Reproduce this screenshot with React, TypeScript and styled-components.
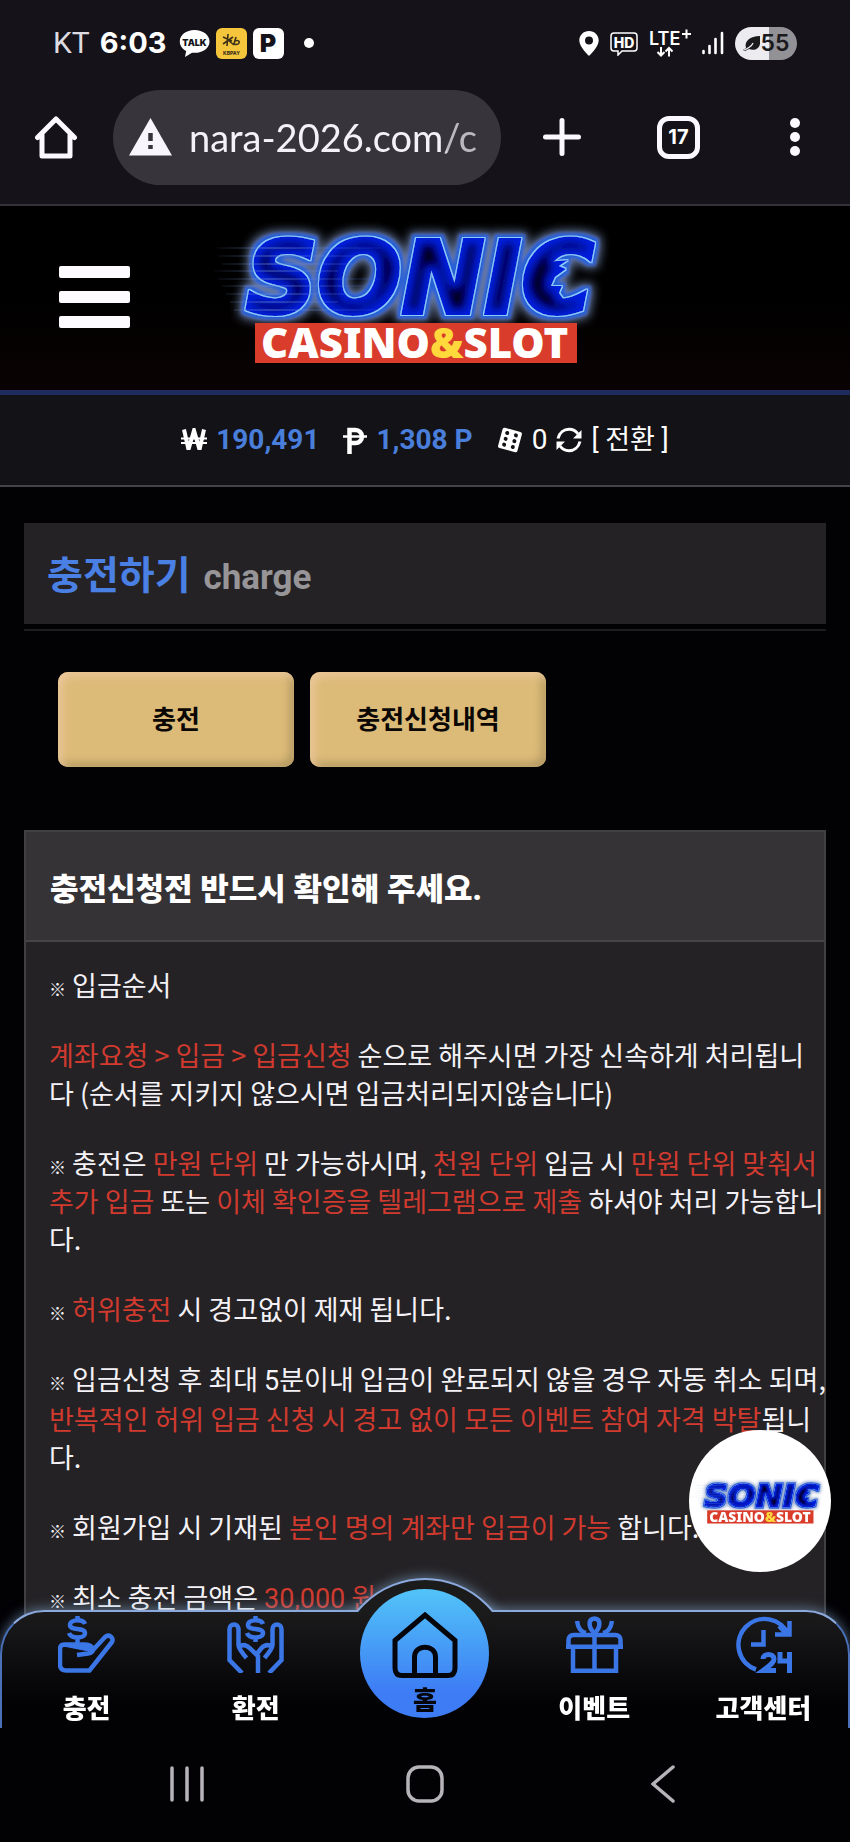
import React, { useId } from "react";
import styled, { createGlobalStyle } from "styled-components";

const GlobalStyle = createGlobalStyle`
  *, *::before, *::after { box-sizing: border-box; }
  html, body { margin: 0; background: #020104; }
  body { font-family: Roboto, "Noto Sans CJK KR", sans-serif; color: #fff; }
  button, input { font: inherit; color: inherit; border: 0; background: none; padding: 0; margin: 0; }
  a { color: inherit; text-decoration: none; }
  h1, h2, p { margin: 0; }
  svg { display: block; flex: none; }
`;

const Screen = styled.div`
  height: 100vh;
  display: flex;
  flex-direction: column;
  overflow: hidden;
`;

/* ---------- device status bar ---------- */

const StatusBar = styled.div`
  flex: none;
  display: flex;
  justify-content: space-between;
  align-items: center;
  height: 86px;
  padding: 0 53px;
  background: #151319;
`;

const StatusGroup = styled.div<{ $gap: number }>`
  display: flex;
  align-items: center;
  gap: ${(p) => p.$gap}px;
`;

const Carrier = styled.span`
  font: 400 30px/40px Roboto, sans-serif;
  color: #dddbe1;
  margin-right: 4px;
`;

const Clock = styled.span`
  font: 700 29px/40px Inter, sans-serif;
  margin-right: 6px;
`;

const AppBadge = styled.span<{ $bg: string }>`
  display: grid;
  place-items: center;
  width: 31px;
  height: 31px;
  border-radius: 6px;
  background: ${(p) => p.$bg};
  color: #151319;
  font: 900 25px/31px Inter, sans-serif;
`;

const Dot = styled.span`
  width: 10px;
  height: 10px;
  margin-left: 14px;
  border-radius: 50%;
  background: #fff;
`;

const Battery = styled.span`
  display: flex;
  align-items: center;
  justify-content: center;
  gap: 1px;
  width: 62px;
  height: 33px;
  border-radius: 17px;
  background: linear-gradient(90deg, #ecebef 55%, #929196 55%);
  color: #1a191c;
  font: 600 23px/33px Inter, sans-serif;
`;

/* ---------- browser toolbar ---------- */

const Toolbar = styled.div`
  flex: none;
  display: flex;
  align-items: center;
  height: 120px;
  padding: 4px 29px 20px 30px;
  background: #151319;
  border-bottom: 2px solid #343238;
`;

const IconButton = styled.button`
  display: grid;
  place-items: center;
  width: 52px;
  height: 94px;
`;

const AddressBar = styled.label`
  display: flex;
  align-items: center;
  flex: 0 1 388px;
  min-width: 0;
  height: 95px;
  margin-left: 31px;
  padding: 0 18px 0 16px;
  gap: 17px;
  border-radius: 48px;
  background: #37343b;
`;

const AddressInput = styled.input`
  flex: 1;
  min-width: 0;
  width: 0;
  height: 60px;
  outline: none;
  color: #f4f2f8;
  font: 400 38px/60px Lato, sans-serif;
  mask-image: linear-gradient(90deg, #000 87%, rgba(0, 0, 0, 0.7) 88%);
`;

const ToolbarActions = styled.div`
  flex: 1;
  display: flex;
  align-items: center;
  justify-content: space-between;
  margin-left: 35px;
`;

const TabCount = styled.span`
  display: grid;
  place-items: center;
  width: 43px;
  height: 43px;
  border: 5px solid #fbf9ff;
  border-radius: 12px;
  font: 700 20px/32px Inter, sans-serif;
`;

/* ---------- site ---------- */

const Site = styled.div`
  flex: 1;
  min-height: 0;
  overflow-y: auto;
  scrollbar-width: none;
  padding-bottom: 260px;
`;

const SiteHeader = styled.header`
  display: grid;
  grid-template-columns: 1fr auto 1fr;
  align-items: center;
  height: 189px;
  padding: 0 79px 10px 59px;
  background: linear-gradient(#000 50%, #0a0203);
  border-bottom: 5px solid #1d2b5e;
`;

const MenuButton = styled.button`
  display: flex;
  flex-direction: column;
  gap: 13px;
  width: 71px;
  padding-top: 8px;
`;

const MenuBar = styled.span`
  height: 12px;
  border-radius: 2px;
  background: #fdfbff;
`;

const Wallet = styled.div`
  display: flex;
  align-items: center;
  justify-content: center;
  height: 92px;
  background: #131216;
  border-bottom: 2px solid #444346;
  font-size: 28px;
  line-height: 38px;
`;

const WalletItem = styled.span`
  display: flex;
  align-items: center;
  gap: 9px;

  & + & {
    margin-left: 24px;
  }
`;

const Amount = styled.strong`
  font-weight: 700;
  color: #4a7edb;
`;

const Convert = styled.button`
  font-size: 27px;
`;

const Page = styled.main`
  padding: 36px 24px 0;
`;

const PageTitle = styled.div`
  display: flex;
  align-items: baseline;
  gap: 13px;
  height: 101px;
  padding: 25px 23px 0;
  background: #242225;
`;

const TitleText = styled.h1`
  font-size: 39px;
  line-height: 56px;
  font-weight: 700;
  color: #4a80e4;
`;

const TitleSub = styled.span`
  font-size: 35px;
  font-weight: 700;
  color: #979598;
`;

const Rule = styled.div`
  height: 2px;
  margin-top: 5px;
  background: #1d1c1f;
`;

const Tabs = styled.div`
  display: flex;
  gap: 16px;
  padding: 41px 34px 63px;
`;

const TabButton = styled.button`
  flex: 0 1 236px;
  height: 95px;
  border-radius: 10px;
  background: #dcbb79;
  box-shadow: inset 4px 4px 8px #ecc89b, inset -4px -4px 8px #b0965f;
  color: #0a0704;
  font-size: 26px;
  line-height: 36px;
  font-weight: 700;
`;

const Notice = styled.section`
  border: 2px solid #403f42;
  background: #242225;
`;

const NoticeTitle = styled.h2`
  padding: 36px 24px 28px;
  background: #353336;
  border-bottom: 2px solid #454447;
  font-size: 31px;
  line-height: 44px;
  font-weight: 900;
`;

const NoticeBody = styled.div`
  display: flex;
  flex-direction: column;
  gap: 32px;
  margin-right: -12px;
  padding: 24px 0 24px 23px;
  font-family: "Noto Sans CJK KR", sans-serif;
  font-size: 27px;
  line-height: 38px;
  color: #f4f2f6;
`;

const Warn = styled.span`
  color: #d03a2f;
`;

const Latin = styled.span`
  font-family: Roboto, sans-serif;
`;

const Mark = styled.span`
  font-size: 17px;
  font-weight: 900;
  line-height: 20px;
`;

/* ---------- fixed layers ---------- */

const FloatingLogo = styled.a`
  position: fixed;
  right: 19px;
  bottom: 270px;
  display: grid;
  place-items: center;
  width: 142px;
  height: 142px;
  border-radius: 50%;
  overflow: hidden;
  background: #fff;
`;

const BottomDock = styled.div`
  position: fixed;
  left: 0;
  right: 0;
  bottom: 0;
`;

const TabNav = styled.nav`
  position: relative;
  display: grid;
  grid-template-columns: repeat(5, 1fr);
  height: 118px;
  border: 2px solid #4a70b8;
  border-top-color: #8ba9dd;
  border-bottom: 0;
  border-radius: 44px 44px 0 0;
  background: linear-gradient(#1b1b1c, #020104 80%);
  box-shadow: 0 -2px 12px rgba(140, 180, 220, 0.5);
`;

/* arc that rises over the bar behind the home button */
const HomeArc = styled.span`
  position: absolute;
  left: 50%;
  top: -34px;
  width: 176px;
  height: 176px;
  margin-left: -88px;
  border: 2px solid #8ba9dd;
  border-radius: 50%;
  background: #1b1b1c;
  box-shadow: 0 -2px 12px rgba(140, 180, 220, 0.5);
  clip-path: inset(-20px -20px 142px -20px);
`;

const NavLink = styled.a`
  position: relative;
  display: flex;
  flex-direction: column;
  align-items: center;
  gap: 17px;
  padding-top: 4px;
  font-size: 26px;
  line-height: 38px;
  font-weight: 900;
  white-space: nowrap;
`;

const HomeLink = styled.a`
  position: relative;
  justify-self: center;
  display: flex;
  flex-direction: column;
  align-items: center;
  gap: 4px;
  width: 129px;
  height: 129px;
  margin-top: -23px;
  padding-top: 23px;
  border-radius: 50%;
  background: linear-gradient(#52c4f8, #3d7cf5 80%);
  color: #05060c;
  font-size: 26px;
  line-height: 38px;
  font-weight: 900;
`;

const SystemNav = styled.div`
  position: relative;
  display: flex;
  justify-content: space-between;
  align-items: center;
  height: 114px;
  padding: 0 calc(22% - 20px) 2px;
  background: #020104;
`;

const SystemButton = styled.button`
  display: grid;
  place-items: center;
  width: 40px;
  height: 60px;
`;

/* ---------- drawings ---------- */

const SPEED_LINES = [32, 40, 48, 55, 63, 70, 78, 86, 94];

function Logo({ width }: { width: number }) {
  const id = useId().replace(/[^a-zA-Z0-9]/g, "");
  return (
    <svg width={width} height={(width * 155) / 430} viewBox="0 0 430 155" role="img" aria-label="SONIC CASINO&SLOT">
      <defs>
        <filter id={`n${id}`} filterUnits="userSpaceOnUse" x="0" y="0" width="430" height="155">
          <feMorphology in="SourceAlpha" operator="dilate" radius="6" />
          <feGaussianBlur stdDeviation="5" result="hazeShape" />
          <feFlood floodColor="#7f97c4" floodOpacity="0.8" />
          <feComposite in2="hazeShape" operator="in" result="haze" />
          <feMorphology in="SourceAlpha" operator="dilate" radius="4" />
          <feGaussianBlur stdDeviation="1.5" result="haloShape" />
          <feFlood floodColor="#2b62d8" />
          <feComposite in2="haloShape" operator="in" result="halo" />
          <feMorphology in="SourceAlpha" operator="dilate" radius="1" result="edgeShape" />
          <feFlood floodColor="#8fd0ff" />
          <feComposite in2="edgeShape" operator="in" result="edge" />
          <feMorphology in="SourceAlpha" operator="erode" radius="5" />
          <feGaussianBlur stdDeviation="4" result="coreShape" />
          <feFlood floodColor="#01001c" />
          <feComposite in2="coreShape" operator="in" result="core" />
          <feMerge>
            <feMergeNode in="haze" />
            <feMergeNode in="halo" />
            <feMergeNode in="edge" />
            <feMergeNode in="SourceGraphic" />
            <feMergeNode in="core" />
          </feMerge>
        </filter>
        <linearGradient id={`g${id}`} gradientUnits="userSpaceOnUse" x1="10" y1="0" x2="210" y2="0">
          <stop offset="0" stopColor="#6f8fd0" stopOpacity="0" />
          <stop offset="0.3" stopColor="#6f8fd0" stopOpacity="0.7" />
          <stop offset="1" stopColor="#4a6cff" stopOpacity="0" />
        </linearGradient>
      </defs>
      <g filter={`url(#n${id})`} fill="#0a22e0" stroke="#0a22e0" strokeWidth="4">
        <text x="46" y="97" fontFamily="'DejaVu Sans', sans-serif" fontWeight="700" fontStyle="italic" fontSize="99">SONIC</text>
        <path d="M345 46L368 44L359 50L366 53L355 61L351 70L362 70L359 77L364 84L343 84z" stroke="none" />
      </g>
      {SPEED_LINES.map((y, i) => (
        <path key={y} d={`M${14 + (i % 3) * 4 + (i > 5 ? 12 : 0)} ${y}H${180 - (i % 4) * 14}`} stroke={`url(#g${id})`} strokeWidth="1.2" />
      ))}
      <rect x="55" y="107" width="322" height="40" fill="#d93c2b" />
      <text x="61" y="142" fontFamily="'Noto Sans', sans-serif" fontWeight="900" fontSize="42" fill="#fff">
        CASINO<tspan fill="#ffd93b">&amp;</tspan>SLOT
      </text>
    </svg>
  );
}

const TalkIcon = () => (
  <svg width="31" height="31" viewBox="0 0 31 31">
    <path d="M15.500 2C7 2 .8 7 .8 13.400c0 4.200 2.500 7.500 6.400 9.500L6 29l7-4.300c9.800 1 17.500-4 17.500-11.300C30.500 7 24 2 15.500 2z" fill="#fff" />
    <text x="15.500" y="17.500" textAnchor="middle" fontFamily="Inter, sans-serif" fontWeight="900" fontSize="9" fill="#151319">TALK</text>
  </svg>
);

const StarIcon = () => (
  <svg width="31" height="31" viewBox="0 0 31 31" fill="none" stroke="#3d3117" strokeWidth="1.600">
    <path d="M7 9l9 4M7 16l10-7M12 6l-1 12M12 12l6 5M20 9l-2 7M18 14c3-3 6-1 5 1s-5 2-5 0" />
    <text x="15.500" y="26.500" textAnchor="middle" fontFamily="Inter, sans-serif" fontWeight="800" fontSize="5" fill="#3d3117" stroke="none">KBPAY</text>
  </svg>
);

const PinIcon = () => (
  <svg width="20" height="25" viewBox="0 0 20 25">
    <path fillRule="evenodd" d="M10 0C4.500 0 .3 4.200.3 9.500.3 16 10 25 10 25s9.700-9 9.700-15.500C19.700 4.200 15.500 0 10 0zm0 5.500a4 4 0 1 1 0 8 4 4 0 0 1 0-8z" fill="#fff" />
  </svg>
);

const HdIcon = () => (
  <svg width="28" height="25" viewBox="0 0 28 25" fill="none" stroke="#fff" strokeWidth="1.500">
    <path d="M4 2h20a3 3 0 0 1 3 3v12a3 3 0 0 1-3 3H12l-4 4v-4H4a3 3 0 0 1-3-3V5a3 3 0 0 1 3-3z" />
    <text x="14" y="16.500" textAnchor="middle" fontFamily="Inter, sans-serif" fontWeight="800" fontSize="14" fill="#fff" stroke="none">HD</text>
  </svg>
);

const LteIcon = () => (
  <svg width="42" height="34" viewBox="0 0 42 34" fill="none" stroke="#fff" strokeWidth="2">
    <text x="0" y="19" fontFamily="Inter, sans-serif" fontWeight="600" fontSize="18" fill="#fff" stroke="none">LTE</text>
    <path d="M33 8h9M37.500 3.500v9M12 21v8M8.500 26l3.500 3.500 3.500-3.500M20 30.500v-8M16.500 25.500L20 22l3.500 3.500" />
  </svg>
);

const SignalIcon = () => (
  <svg width="22" height="24" viewBox="0 0 22 24" stroke="#fff" strokeWidth="2.600" strokeLinecap="round">
    <path d="M1.500 20v2M7.500 15v7M13.500 8v14M20 2v20" />
  </svg>
);

const LeafIcon = () => (
  <svg width="17" height="17" viewBox="0 0 17 17">
    <path d="M17 1v8c-1 5-6 7-11 5L2 16l-2-1 3-2C1 6 7 1 17 1z" fill="#1a191c" />
    <path d="M1 15c3-1 8-4 9-7" stroke="#ecebef" strokeWidth="1.300" fill="none" />
  </svg>
);

const HomeIcon = () => (
  <svg width="44" height="44" viewBox="0 0 44 44" fill="none" stroke="#fbf9ff" strokeWidth="5" strokeLinejoin="round" strokeLinecap="round">
    <path d="M3.500 22.500L22 4l18.500 18.500M8 20v21h28V20" />
  </svg>
);

const WarnIcon = () => (
  <svg width="43" height="38" viewBox="0 0 43 38">
    <path d="M21.500 0L43 37.500H0z" fill="#f8f5fd" />
    <path d="M21.500 15v8M21.500 27v4" stroke="#37343b" strokeWidth="4.500" />
  </svg>
);

const PlusIcon = () => (
  <svg width="38" height="38" viewBox="0 0 38 38" stroke="#fbf9ff" strokeWidth="5" strokeLinecap="round">
    <path d="M2.500 19h33M19 2.500v33" />
  </svg>
);

const MoreIcon = () => (
  <svg width="10" height="38" viewBox="0 0 10 38" fill="#fbf9ff">
    <circle cx="5" cy="5" r="5" />
    <circle cx="5" cy="19" r="5" />
    <circle cx="5" cy="33" r="5" />
  </svg>
);

const WonIcon = () => (
  <svg width="26" height="24" viewBox="0 0 26 24" fill="none" stroke="#fff">
    <path d="M3 1.500l4.500 20 5.500-19 5.500 19 4.500-20" strokeWidth="4" />
    <path d="M0 10.500h26M0 15h26" strokeWidth="2" />
  </svg>
);

const PesoIcon = () => (
  <svg width="24" height="27" viewBox="0 0 24 27" fill="none" stroke="#fff">
    <path d="M6.500 27V3h6a6 6 0 0 1 0 13h-6" strokeWidth="4.500" />
    <path d="M0 9.500h24" strokeWidth="2.500" />
  </svg>
);

const DiceIcon = () => (
  <svg width="26" height="26" viewBox="0 0 26 26">
    <g transform="rotate(15 13 13)">
      <rect x="3" y="2.500" width="20" height="21" rx="2" fill="#fff" />
      {[7, 13, 19].map((y) => (
        <g key={y} fill="#131216">
          <circle cx="8.500" cy={y} r="2" />
          <circle cx="17.500" cy={y} r="2" />
        </g>
      ))}
    </g>
  </svg>
);

const RefreshIcon = () => (
  <svg width="26" height="26" viewBox="0 0 26 26" fill="none" stroke="#fff" strokeWidth="3">
    <path d="M2 11.500C3.500 5.500 8 2.300 13 2.300c4 0 7 1.800 9 4.700M24 14.500c-1.500 6-6 9.200-11 9.200-4 0-7-1.800-9-4.700" />
    <path d="M25.500 3v8.500H17zM.5 23v-8.500H9z" fill="#fff" stroke="none" />
  </svg>
);

const DepositIcon = () => (
  <svg width="57" height="57" viewBox="0 0 57 57" fill="none" stroke="#3b76e6" strokeWidth="4.500">
    <path d="M7 28.500h20c5 0 8 2.500 8 5s-2 3.500-5 4l-11 1.500M35 34l12-13c4-3.500 9 .5 7 5L31.500 54.500H8c-4 0-6-2-6-6V33c0-3 2-4.500 5-4.500z" />
    <path d="M27 8c-2-5-15-5-15 1 0 6 15 2 15 8s-14 6-16 0M19.500 0v5M19.500 21v7" />
  </svg>
);

const WithdrawIcon = () => (
  <svg width="57" height="57" viewBox="0 0 57 57" fill="none" stroke="#3b76e6" strokeWidth="4.500">
    <path d="M15 57L2.500 44V13c0-6 9-6 9 0v16c0 3 2 6 8 13M11.500 31c4-3 8-2 11 1l8.500 8v17M42 57l12.500-13V13c0-6-9-6-9 0v16c0 3-2 6-8 13M45.500 31c-4-3-8-2-11 1L29 39" />
    <path d="M36 8c-2-5-15-5-15 1 0 6 15 2 15 8s-14 6-16 0M28.500 0v5M28.500 21v5" />
  </svg>
);

const GiftIcon = () => (
  <svg width="57" height="57" viewBox="0 0 57 57" fill="none" stroke="#3b76e6" strokeWidth="4.500">
    <path d="M2.500 33V24c0-3 2-5 5-5h42c3 0 5 2 5 5v9M0 30.800h57M7 31v23.800h43V31M28.500 17v38" />
    <path d="M28.500 17c-6-5-7-14 0-14.500 7 .5 6 9.500 0 14.500zM11 5c1 7 4 11 9 12M46 5c-1 7-4 11-9 12" />
  </svg>
);

const SupportIcon = () => (
  <svg width="57" height="57" viewBox="0 0 57 57" fill="none" stroke="#3b76e6" strokeWidth="4.500">
    <path d="M21 53.500A26 26 0 1 1 53.500 19M54.500 5v13.500H40M52 18.500L44 10M28.500 14v14.500H16" />
    <path d="M28 43c0-6 11-6 11 0 0 3-2 5-11 11.500h13M45 36v9h10M54.500 36v21" strokeWidth="5" />
  </svg>
);

const NavHomeIcon = () => (
  <svg width="66" height="66" viewBox="0 0 66 66" fill="none" stroke="#05060c" strokeWidth="5">
    <path d="M3 28.500L33 3l30 25.500V56c0 5-2 7.500-7 7.500H10c-5 0-7-2.500-7-7.500z" />
    <path d="M22.500 63V45c0-13 21-13 21 0v18" />
  </svg>
);

/* ---------- page ---------- */

const NAV_LEFT = [
  { label: "충전", icon: <DepositIcon /> },
  { label: "환전", icon: <WithdrawIcon /> },
];
const NAV_RIGHT = [
  { label: "이벤트", icon: <GiftIcon /> },
  { label: "고객센터", icon: <SupportIcon /> },
];

export default function App() {
  return (
    <Screen>
      <GlobalStyle />
      <StatusBar>
        <StatusGroup $gap={6}>
          <Carrier>KT</Carrier>
          <Clock>6:03</Clock>
          <TalkIcon />
          <AppBadge $bg="#f5c63c"><StarIcon /></AppBadge>
          <AppBadge $bg="#fff">P</AppBadge>
          <Dot />
        </StatusGroup>
        <StatusGroup $gap={11}>
          <PinIcon />
          <HdIcon />
          <LteIcon />
          <SignalIcon />
          <Battery><LeafIcon />55</Battery>
        </StatusGroup>
      </StatusBar>

      <Toolbar>
        <IconButton aria-label="홈페이지"><HomeIcon /></IconButton>
        <AddressBar>
          <WarnIcon />
          <AddressInput aria-label="주소" defaultValue="nara-2026.com/c" />
        </AddressBar>
        <ToolbarActions>
          <IconButton aria-label="새 탭"><PlusIcon /></IconButton>
          <IconButton aria-label="탭 목록"><TabCount>17</TabCount></IconButton>
          <IconButton aria-label="더보기"><MoreIcon /></IconButton>
        </ToolbarActions>
      </Toolbar>

      <Site>
        <SiteHeader>
          <MenuButton aria-label="메뉴"><MenuBar /><MenuBar /><MenuBar /></MenuButton>
          <a href="#home"><Logo width={430} /></a>
        </SiteHeader>
        <Wallet>
          <WalletItem><WonIcon /><Amount>190,491</Amount></WalletItem>
          <WalletItem><PesoIcon /><Amount>1,308 P</Amount></WalletItem>
          <WalletItem>
            <DiceIcon />
            <span>0</span>
            <RefreshIcon />
            <Convert>[ 전환 ]</Convert>
          </WalletItem>
        </Wallet>

        <Page>
          <PageTitle>
            <TitleText>충전하기</TitleText>
            <TitleSub>charge</TitleSub>
          </PageTitle>
          <Rule />
          <Tabs>
            <TabButton>충전</TabButton>
            <TabButton>충전신청내역</TabButton>
          </Tabs>

          <Notice>
            <NoticeTitle>충전신청전 반드시 확인해 주세요.</NoticeTitle>
            <NoticeBody>
              <p><Mark>※</Mark> 입금순서</p>
              <p>
                <Warn>계좌요청 &gt; 입금 &gt; 입금신청</Warn> 순으로 해주시면 가장 신속하게 처리됩니<br />다 (순서를 지키지 않으시면 입금처리되지않습니다)
              </p>
              <p>
                <Mark>※</Mark> 충전은 <Warn>만원 단위</Warn> 만 가능하시며, <Warn>천원 단위</Warn> 입금 시 <Warn>만원 단위 맞춰서 추가 입금</Warn> 또는 <Warn>이체 확인증을 텔레그램으로 제출</Warn> 하셔야 처리 가능합니<br />다.
              </p>
              <p><Mark>※</Mark> <Warn>허위충전</Warn> 시 경고없이 제재 됩니다.</p>
              <p>
                <Mark>※</Mark> 입금신청 후 최대 <Latin>5</Latin>분이내 입금이 완료되지 않을 경우 자동 취소 되며, <Warn>반복적인 허위 입금 신청 시 경고 없이 모든 이벤트 참여 자격 박탈</Warn>됩니<br />다.
              </p>
              <p><Mark>※</Mark> 회원가입 시 기재된 <Warn>본인 명의 계좌만 입금이 가능</Warn> 합니다.</p>
              <p><Mark>※</Mark> 최소 충전 금액은 <Warn><Latin>30,000</Latin> 원</Warn></p>
            </NoticeBody>
          </Notice>
        </Page>
      </Site>

      <FloatingLogo href="#top"><Logo width={142} /></FloatingLogo>

      <BottomDock>
        <TabNav>
          <HomeArc />
          {NAV_LEFT.map((n) => (
            <NavLink key={n.label} href="#nav">{n.icon}{n.label}</NavLink>
          ))}
          <HomeLink href="#home"><NavHomeIcon />홈</HomeLink>
          {NAV_RIGHT.map((n) => (
            <NavLink key={n.label} href="#nav">{n.icon}{n.label}</NavLink>
          ))}
        </TabNav>
        <SystemNav>
          <SystemButton aria-label="최근 앱">
            <svg width="34" height="36" viewBox="0 0 34 36" stroke="#b7b4b9" strokeWidth="3.500" strokeLinecap="round">
              <path d="M2 2v32M17 2v32M32 2v32" />
            </svg>
          </SystemButton>
          <SystemButton aria-label="홈">
            <svg width="38" height="38" viewBox="0 0 38 38" fill="none" stroke="#b7b4b9" strokeWidth="3.500">
              <rect x="2" y="2" width="34" height="34" rx="11" />
            </svg>
          </SystemButton>
          <SystemButton aria-label="뒤로">
            <svg width="24" height="38" viewBox="0 0 24 38" fill="none" stroke="#b7b4b9" strokeWidth="3.500" strokeLinecap="round">
              <path d="M22 2L2 19l20 17" />
            </svg>
          </SystemButton>
        </SystemNav>
      </BottomDock>
    </Screen>
  );
}
